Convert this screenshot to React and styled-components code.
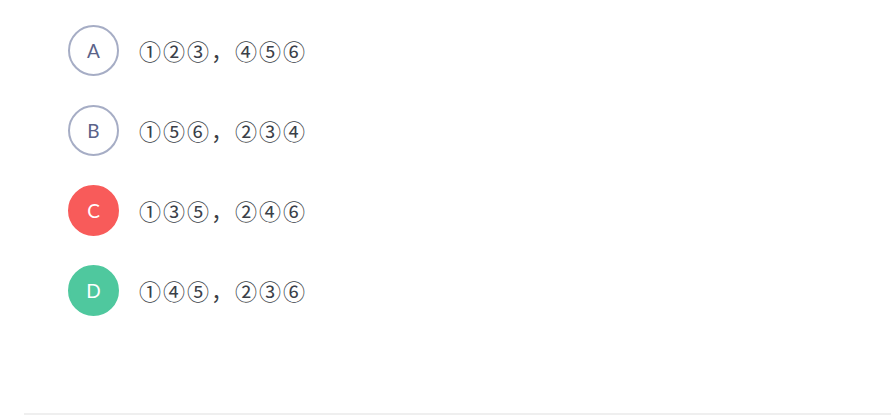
import React from 'react';
import styled, { createGlobalStyle } from 'styled-components';

const GlobalStyle = createGlobalStyle`
  html, body {
    margin: 0;
    padding: 0;
    background: #fff;
  }
  body {
    font-family: Lato, "Noto Sans CJK SC", sans-serif;
  }
`;

const Page = styled.div`
  width: 891px;
  height: 417px;
  display: flex;
  flex-direction: column;
  box-sizing: border-box;
`;

const Options = styled.div`
  flex: 1;
  display: flex;
  flex-direction: column;
  padding: 10px 0 0 68px;
`;

const Option = styled.div`
  height: 80px;
  display: flex;
  align-items: center;
  gap: 20px;
`;

const Badge = styled.div`
  width: 51px;
  height: 51px;
  box-sizing: border-box;
  border-radius: 50%;
  display: flex;
  align-items: center;
  justify-content: center;
  font-family: Lato, "Noto Sans", sans-serif;
  font-size: 19px;
  border: 2px solid ${p => p.state === 'wrong' ? '#f85b5a' : p.state === 'right' ? '#4fc89e' : '#a6adc5'};
  background: ${p => p.state === 'wrong' ? '#f85b5a' : p.state === 'right' ? '#4fc89e' : '#fff'};
  color: ${p => p.state ? '#fff' : '#5b6389'};
`;

const Label = styled.div`
  font-family: "Noto Sans CJK SC", sans-serif;
  font-size: 22px;
  color: #3b3f48;
  letter-spacing: 2px;
`;

const Footer = styled.div`
  margin-left: 24px;
  height: 2px;
  background: #efefef;
  margin-bottom: 2px;
`;

const options = [
  { key: 'A', text: '①②③，④⑤⑥' },
  { key: 'B', text: '①⑤⑥，②③④' },
  { key: 'C', text: '①③⑤，②④⑥', state: 'wrong' },
  { key: 'D', text: '①④⑤，②③⑥', state: 'right' }
];

export default function App() {
  return (
    <Page>
      <GlobalStyle />
      <Options>
        {options.map(item => (
          <Option key={item.key}>
            <Badge state={item.state}>{item.key}</Badge>
            <Label>{item.text}</Label>
          </Option>
        ))}
      </Options>
      <Footer />
    </Page>
  );
}
